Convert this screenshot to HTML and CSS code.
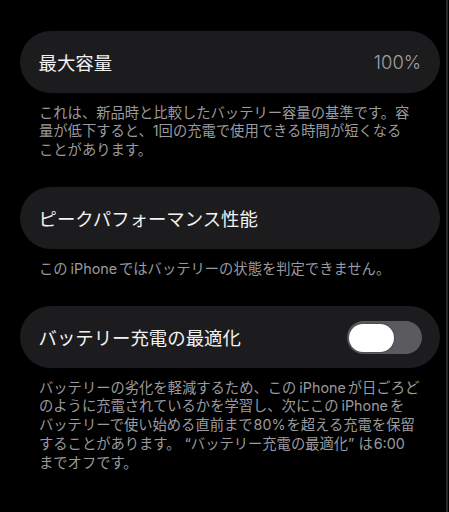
FILE: index.html
```html
<!DOCTYPE html>
<html lang="ja">
<head>
<meta charset="utf-8">
<link rel="stylesheet" href="styles.css">
</head>
<body>
<main class="list">
  <section class="group">
    <div class="card">
      <span class="label">最大容量</span>
      <span class="value">100%</span>
    </div>
    <p class="desc">これは、新品時と比較したバッテリー容量の基準です。容<br>量が低下すると、1回の充電で使用できる時間が短くなる<br>ことがあります。</p>
  </section>
  <section class="group">
    <div class="card">
      <span class="label">ピークパフォーマンス性能</span>
    </div>
    <p class="desc">この<span class="latin">iPhone</span>ではバッテリーの状態を判定できません。</p>
  </section>
  <section class="group">
    <div class="card">
      <span class="label">バッテリー充電の最適化</span>
      <span class="toggle"><span class="knob"></span></span>
    </div>
    <p class="desc">バッテリーの劣化を軽減するため、この<span class="latin">iPhone</span>が日ごろど<br>のように充電されているかを学習し、次にこの<span class="latin">iPhone</span>を<br>バッテリーで使い始める直前まで<span class="num">80%</span>を超える充電を保留<br>することがあります。<span class="quote open">“</span>バッテリー充電の最適化<span class="quote close">”</span>は<span class="num">6:00</span><br>までオフです。</p>
  </section>
</main>
</body>
</html>
```
FILE: styles.css
```css
html {
  background: linear-gradient(to right, #000 0, #000 446px, #2a2a2c 446px, #2a2a2c 448px, #000 448px);
  min-height: 100%;
}
body {
  margin: 0;
  width: 449px;
  height: 512px;
  overflow: hidden;
  font-family: Inter, "Noto Sans CJK JP", sans-serif;
  color: #fff;
}
.list {
  padding: 31px 0 0 20px;
  width: 420px;
}
.group {
  margin-bottom: 27.5px;
}
.card {
  height: 61.5px;
  background: #1c1c1e;
  border-radius: 31px;
  display: flex;
  align-items: center;
  justify-content: space-between;
  padding: 0 18px 0 18.5px;
}
.label {
  font-size: 18.4px;
  color: #f2f2f2;
}
.value {
  font-size: 18.4px;
  font-weight: 300;
  color: #a0a0a5;
  padding-right: 1px;
}
.desc {
  margin: 11px 0 0 0;
  padding-left: 19px;
  font-size: 14.3px;
  line-height: 18.8px;
  color: #9a9a9f;
  white-space: nowrap;
}
.latin {
  margin-left: 3px;
  margin-right: 2px;
}
.num {
  margin: 0 1px;
}
.quote.open {
  margin-left: 4px;
}
.quote.close {
  margin-right: 4px;
}
.toggle {
  width: 75px;
  height: 33px;
  border-radius: 17px;
  background: #5a5a5f;
  display: flex;
  align-items: center;
  padding: 0 2px;
  box-sizing: border-box;
  margin-top: 2px;
}
.knob {
  width: 45px;
  height: 28px;
  border-radius: 14px;
  background: #fff;
  box-shadow: 0 0 2px rgba(0,0,0,0.4);
}
```
